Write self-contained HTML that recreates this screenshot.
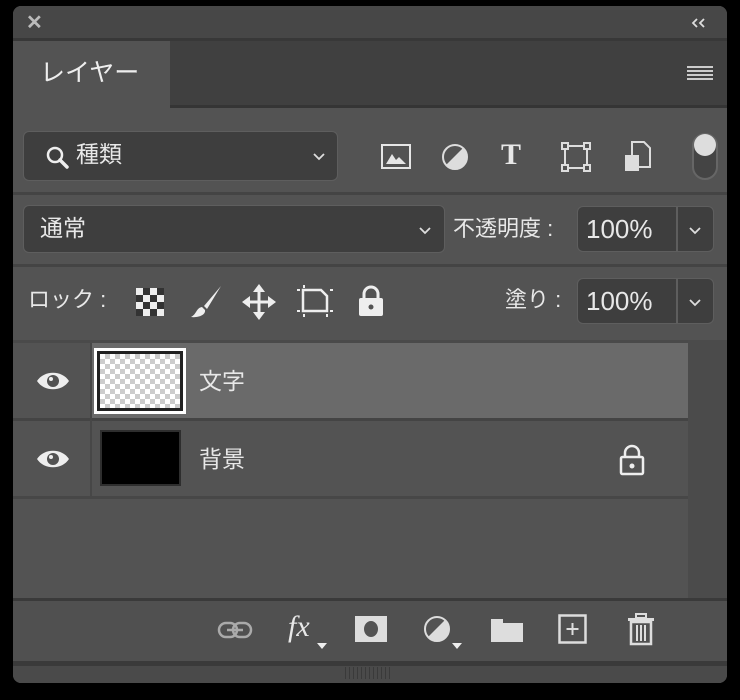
<!DOCTYPE html>
<html><head><meta charset="utf-8"><style>
*{margin:0;padding:0;box-sizing:border-box}
body{width:740px;height:700px;background:#000;position:relative;overflow:hidden;font-family:"Liberation Sans","Noto Sans CJK JP",sans-serif;color:#e8e8e8}
.a{position:absolute}
.box{position:absolute;background:#3e3e3e;border:1.5px solid #5e5e5e;border-radius:6px}
.t{position:absolute;font-size:22px;line-height:1;white-space:nowrap}
svg{position:absolute;overflow:visible}
</style></head><body>
<div class="a" style="left:13px;top:6px;width:714px;height:677px;background:#535353;border-radius:8px;overflow:hidden">
  <div class="a" style="left:0;top:0;width:714px;height:32px;background:#474747"></div>
  <div class="a" style="left:0;top:32px;width:714px;height:3px;background:#383838"></div>
  <div class="a" style="left:157px;top:35px;width:557px;height:67px;background:#404040;border-bottom:3px solid #353535"></div>
  <div class="a" style="left:0;top:186px;width:714px;height:3px;background:#444"></div>
  <div class="a" style="left:0;top:258px;width:714px;height:3px;background:#444"></div>
  <div class="a" style="left:675px;top:334px;width:39px;height:258px;background:#4b4b4b"></div>
  <div class="a" style="left:0;top:334px;width:675px;height:3px;background:#4a4a4a"></div>
  <div class="a" style="left:79px;top:337px;width:596px;height:75px;background:#6a6a6a"></div>
  <div class="a" style="left:0;top:412px;width:675px;height:3px;background:#444"></div>
  <div class="a" style="left:0;top:490px;width:675px;height:3px;background:#474747"></div>
  <div class="a" style="left:77px;top:337px;width:2px;height:153px;background:#474747"></div>
  <div class="a" style="left:0;top:592px;width:714px;height:3px;background:#3a3a3a"></div>
  <div class="a" style="left:0;top:595px;width:714px;height:60px;background:#505050"></div>
  <div class="a" style="left:0;top:655px;width:714px;height:5px;background:#3a3a3a"></div>
  <div class="a" style="left:0;top:660px;width:714px;height:17px;background:#4a4a4a"></div>
  <div class="a" style="left:332px;top:661px;width:48px;height:12px;background:repeating-linear-gradient(90deg,#3a3a3a 0 1px,transparent 1px 4px)"></div>
</div>
<!-- title bar -->
<div class="t" style="left:26px;top:13px;font-size:20px;font-weight:bold;color:#bbb">✕</div>
<svg style="left:691px;top:18px" width="16" height="10"><path d="M6 1L2 5L6 9M13 1L9 5L13 9" fill="none" stroke="#ddd" stroke-width="1.8"/></svg>
<div class="t" style="left:40px;top:61px;font-size:25px;color:#eee">レイヤー</div>
<svg style="left:687px;top:66px" width="26" height="16"><g fill="#ccc"><rect y="0" width="26" height="2"/><rect y="4" width="26" height="2"/><rect y="8" width="26" height="2"/><rect y="12" width="26" height="2"/></g></svg>
<!-- filter row -->
<div class="box" style="left:23px;top:131px;width:315px;height:50px"></div>
<svg style="left:45px;top:145px" width="26" height="26"><circle cx="10" cy="10" r="7" fill="none" stroke="#eee" stroke-width="2.5"/><line x1="15" y1="15" x2="22" y2="22" stroke="#eee" stroke-width="3.5" stroke-linecap="round"/></svg>
<div class="t" style="left:76px;top:143px;font-size:23px">種類</div>
<svg style="left:313px;top:153px" width="12" height="8"><path d="M1 1L6 6L11 1" fill="none" stroke="#ddd" stroke-width="1.8"/></svg>
<svg style="left:381px;top:144px" width="30" height="25"><rect x="1" y="1" width="28" height="23" fill="none" stroke="#e6e6e6" stroke-width="2"/><path d="M5 20L11 10L15 16L18 13L25 20Z" fill="#e6e6e6"/></svg>
<svg style="left:441px;top:143px" width="28" height="28"><circle cx="14" cy="14" r="12" fill="#ddd"/><path d="M14 2A12 12 0 0 0 5 22L22 5A12 12 0 0 0 14 2Z" fill="#535353"/><circle cx="14" cy="14" r="12" fill="none" stroke="#ddd" stroke-width="2"/></svg>
<div class="t" style="left:501px;top:140px;font-size:30px;font-family:'Liberation Serif',serif;font-weight:bold">T</div>
<svg style="left:561px;top:142px" width="30" height="30"><rect x="4" y="4" width="22" height="22" fill="none" stroke="#ddd" stroke-width="2"/><g fill="#535353" stroke="#ddd" stroke-width="2"><rect x="1" y="1" width="6" height="6"/><rect x="23" y="1" width="6" height="6"/><rect x="1" y="23" width="6" height="6"/><rect x="23" y="23" width="6" height="6"/></g></svg>
<svg style="left:624px;top:141px" width="28" height="32"><path d="M8 1H20L26 7V26H8Z" fill="none" stroke="#ddd" stroke-width="2"/><rect x="1" y="14" width="14" height="16" fill="#ddd"/></svg>
<div class="a" style="left:692px;top:133px;width:26px;height:47px;border:2px solid #666;border-radius:13px;background:#444"></div>
<div class="a" style="left:694px;top:134px;width:22px;height:22px;border-radius:50%;background:#ddd"></div>
<!-- blend row -->
<div class="box" style="left:23px;top:205px;width:422px;height:48px"></div>
<div class="t" style="left:40px;top:217px;font-size:23px">通常</div>
<svg style="left:419px;top:227px" width="12" height="8"><path d="M1 1L6 6L11 1" fill="none" stroke="#ddd" stroke-width="1.8"/></svg>
<div class="t" style="left:453px;top:218px;font-size:22px">不透明度 :</div>
<div class="box" style="left:577px;top:206px;width:137px;height:46px"></div>
<div class="a" style="left:676px;top:207px;width:2px;height:44px;background:#5e5e5e"></div>
<div class="t" style="left:586px;top:216px;font-size:26px">100%</div>
<svg style="left:689px;top:227px" width="12" height="8"><path d="M1 1L6 6L11 1" fill="none" stroke="#ddd" stroke-width="1.8"/></svg>
<!-- lock row -->
<div class="t" style="left:28px;top:289px;font-size:22px">ロック :</div>
<svg style="left:136px;top:288px" width="28" height="28"><rect width="28" height="28" fill="#eee"/><g fill="#333"><rect x="7" y="0" width="7" height="7"/><rect x="21" y="0" width="7" height="7"/><rect x="0" y="7" width="7" height="7"/><rect x="14" y="7" width="7" height="7"/><rect x="7" y="14" width="7" height="7"/><rect x="21" y="14" width="7" height="7"/><rect x="0" y="21" width="7" height="7"/><rect x="14" y="21" width="7" height="7"/></g></svg>
<svg style="left:188px;top:284px" width="36" height="36"><path d="M33 2L16 22L19 25Z" fill="#eee"/><path d="M14 23C8 24 9 30 3 33C10 34 18 31 17 26Z" fill="#eee"/></svg>
<svg style="left:242px;top:284px" width="34" height="36"><path d="M17 2L17 34M2 18L32 18" stroke="#eee" stroke-width="3"/><path d="M17 0L11 8H23ZM17 36L11 28H23ZM0 18L8 12V24ZM34 18L26 12V24Z" fill="#eee"/></svg>
<svg style="left:297px;top:285px" width="36" height="32"><path d="M6 5H24L30 11V26H6Z" fill="none" stroke="#eee" stroke-width="2.5"/><g fill="#eee"><rect x="0" y="4" width="3" height="2"/><rect x="6" y="0" width="2" height="3"/><rect x="0" y="25" width="3" height="2"/><rect x="33" y="25" width="3" height="2"/><rect x="29" y="29" width="2" height="3"/><rect x="6" y="29" width="2" height="3"/><rect x="33" y="4" width="3" height="2"/></g></svg>
<svg style="left:358px;top:285px" width="26" height="32"><path d="M6 14V9A7 7 0 0 1 20 9V14" fill="none" stroke="#eee" stroke-width="3"/><rect x="1" y="13" width="24" height="18" rx="2" fill="#eee"/><circle cx="13" cy="22" r="2.5" fill="#535353"/></svg>
<div class="t" style="left:505px;top:289px;font-size:22px">塗り :</div>
<div class="box" style="left:577px;top:278px;width:137px;height:46px"></div>
<div class="a" style="left:676px;top:279px;width:2px;height:44px;background:#5e5e5e"></div>
<div class="t" style="left:586px;top:288px;font-size:26px">100%</div>
<svg style="left:689px;top:299px" width="12" height="8"><path d="M1 1L6 6L11 1" fill="none" stroke="#ddd" stroke-width="1.8"/></svg>
<!-- layers -->
<svg style="left:36px;top:370px" width="34" height="22"><path d="M1 11C8 0 26 0 33 11C26 22 8 22 1 11Z" fill="#eee"/><circle cx="17" cy="11" r="6" fill="#535353"/><circle cx="15" cy="9" r="2" fill="#eee"/></svg>
<svg style="left:36px;top:448px" width="34" height="22"><path d="M1 11C8 0 26 0 33 11C26 22 8 22 1 11Z" fill="#eee"/><circle cx="17" cy="11" r="6" fill="#535353"/><circle cx="15" cy="9" r="2" fill="#eee"/></svg>
<div class="a" style="left:94px;top:348px;width:92px;height:66px;background:#fff;padding:3px"><div style="width:86px;height:60px;background:#222;padding:3px"><div style="width:80px;height:54px;background-color:#fff;background-image:linear-gradient(45deg,#ccc 25%,transparent 25%,transparent 75%,#ccc 75%),linear-gradient(45deg,#ccc 25%,transparent 25%,transparent 75%,#ccc 75%);background-size:10px 10px;background-position:0 0,5px 5px"></div></div></div>
<div class="t" style="left:199px;top:370px;font-size:23px">文字</div>
<div class="a" style="left:100px;top:430px;width:81px;height:56px;background:#000;border:2px solid #2e2e2e"></div>
<div class="t" style="left:199px;top:448px;font-size:23px">背景</div>
<svg style="left:619px;top:444px" width="26" height="32"><path d="M6 14V9A7 7 0 0 1 20 9V14" fill="none" stroke="#eee" stroke-width="2.5"/><rect x="2" y="13" width="22" height="17" rx="1.5" fill="none" stroke="#eee" stroke-width="2.5"/><circle cx="13" cy="22" r="2.5" fill="#eee"/></svg>
<!-- footer -->
<svg style="left:217px;top:620px" width="36" height="20"><rect x="2" y="3" width="18" height="14" rx="7" fill="none" stroke="#aaa" stroke-width="2.5"/><rect x="16" y="3" width="18" height="14" rx="7" fill="none" stroke="#aaa" stroke-width="2.5"/><line x1="10" y1="10" x2="26" y2="10" stroke="#aaa" stroke-width="2.5"/></svg>
<div class="t" style="left:288px;top:612px;font-size:30px;font-style:italic;font-family:'Liberation Serif',serif">fx</div>
<svg style="left:317px;top:643px" width="10" height="6"><path d="M0 0H10L5 6Z" fill="#eee"/></svg>
<svg style="left:355px;top:616px" width="32" height="26"><rect width="32" height="26" fill="#ddd"/><ellipse cx="16" cy="13" rx="7" ry="8" fill="#535353"/></svg>
<svg style="left:423px;top:614px" width="30" height="30"><circle cx="14" cy="15" r="12" fill="#ddd"/><path d="M14 3A12 12 0 0 0 5 23L22 6A12 12 0 0 0 14 3Z" fill="#535353"/><circle cx="14" cy="15" r="12" fill="none" stroke="#ddd" stroke-width="2"/></svg>
<svg style="left:452px;top:643px" width="10" height="6"><path d="M0 0H10L5 6Z" fill="#eee"/></svg>
<svg style="left:490px;top:615px" width="34" height="28"><path d="M1 4H13V8H33V27H1Z" fill="#ddd"/></svg>
<svg style="left:558px;top:614px" width="30" height="30"><rect x="1.5" y="1.5" width="26" height="27" fill="none" stroke="#ddd" stroke-width="2.5"/><path d="M14.5 9V21M8.5 15H20.5" stroke="#ddd" stroke-width="2"/></svg>
<svg style="left:626px;top:612px" width="30" height="34"><rect x="2" y="6" width="26" height="3" fill="#ddd"/><rect x="10" y="2" width="10" height="4" fill="none" stroke="#ddd" stroke-width="2"/><path d="M5 10H25V32H5Z" fill="none" stroke="#ddd" stroke-width="2.5"/><path d="M11 13V29M15 13V29M19 13V29" stroke="#ddd" stroke-width="2"/></svg>
</body></html>
